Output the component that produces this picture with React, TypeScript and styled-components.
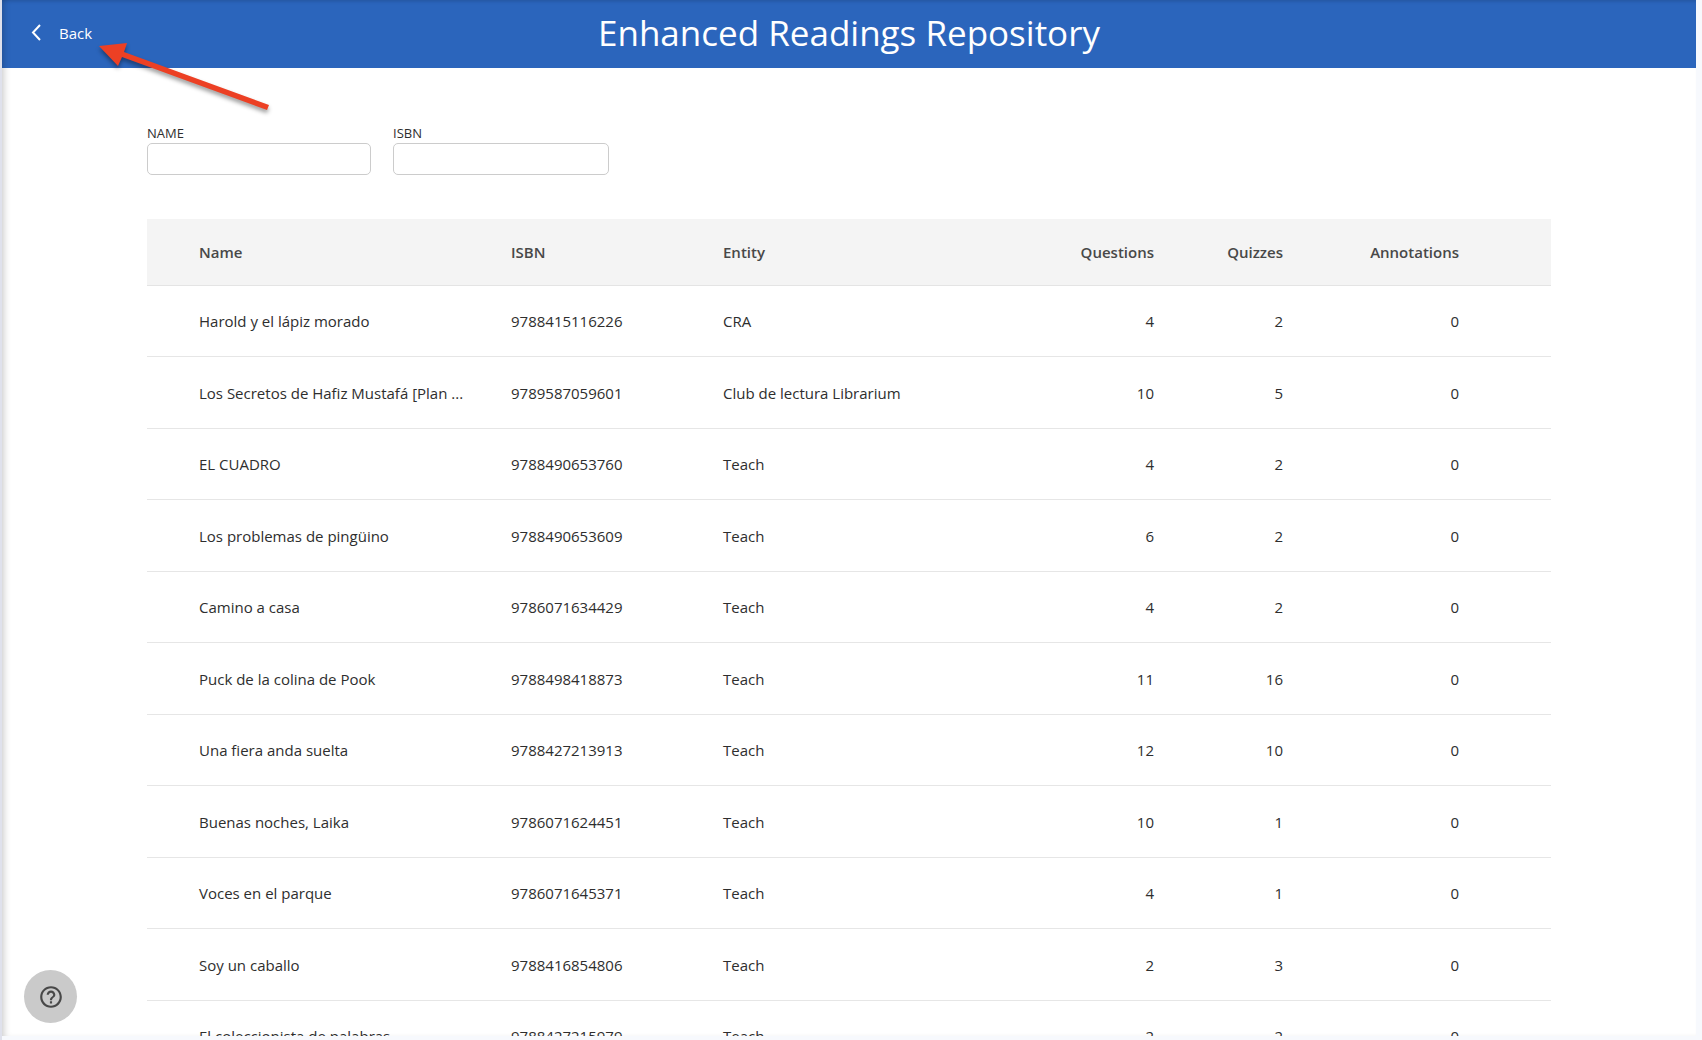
import React from "react";
import styled, { createGlobalStyle } from "styled-components";

const GlobalStyle = createGlobalStyle`
  *, *::before, *::after { box-sizing: border-box; }
  body {
    margin: 0;
    background: #f7f9fd;
    color: #2e2e2e;
    font-family: "Open Sans", "Noto Sans", sans-serif;
    font-size: 15px;
  }
`;

const Page = styled.div`
  height: 100vh;
  padding: 0 6px 4px 2px;
  background: linear-gradient(to right, #dfe1ec 2px, #f7f9fd 2px);
`;

const Panel = styled.div`
  position: relative;
  height: 100%;
  overflow: hidden;
  background: #fff;

  &::after {
    content: "";
    position: absolute;
    inset: 0;
    pointer-events: none;
    box-shadow: inset 6px 0 7px -4px rgba(0, 0, 0, 0.2),
      inset 0 4px 5px -4px rgba(0, 0, 0, 0.2);
  }
`;

const TopBar = styled.header`
  display: grid;
  grid-template-columns: 1fr auto 1fr;
  align-items: center;
  height: 68px;
  padding: 0 24px 2px;
  background: #2b65bc;
  color: #fff;
`;

const BackButton = styled.button`
  display: flex;
  align-items: center;
  justify-self: start;
  gap: 13px;
  padding: 0;
  border: 0;
  background: none;
  color: inherit;
  font: inherit;
  font-weight: 500;
  line-height: 24px;
  cursor: pointer;
`;

const Title = styled.h1`
  margin: 0;
  font-size: 35px;
  font-weight: 400;
  line-height: 48px;
`;

const Content = styled.main`
  padding: 56px 145px 0;
`;

const Filters = styled.form`
  display: flex;
  gap: 22px;
  margin-bottom: 44px;
`;

const Field = styled.div<{ $width: number }>`
  display: flex;
  flex-direction: column;
  width: ${(p) => p.$width}px;
`;

const Label = styled.label`
  font-size: 13px;
  line-height: 19px;
  text-transform: uppercase;
`;

const TextInput = styled.input`
  height: 32px;
  padding: 0 8px;
  border: 1px solid #ccc;
  border-radius: 5px;
  background: #fff;
  color: inherit;
  font: inherit;
`;

const Table = styled.table`
  width: 100%;
  table-layout: fixed;
  border-collapse: separate;
  border-spacing: 0;
`;

const Col = styled.col<{ $width?: number }>`
  width: ${(p) => (p.$width ? `${p.$width}px` : "auto")};
`;

const HeadCell = styled.th<{ $numeric?: boolean }>`
  height: 67px;
  padding: 0 17px;
  border-bottom: 1px solid #e4e4e4;
  background: #f4f4f4;
  color: #484848;
  font-weight: 600;
  text-align: ${(p) => (p.$numeric ? "right" : "left")};
`;

const Row = styled.tr`
  height: 71px;

  &:nth-child(even) {
    height: 72px;
  }
`;

const Cell = styled.td<{ $numeric?: boolean }>`
  padding: 0 17px;
  border-bottom: 1px solid #e6e6e6;
  overflow: hidden;
  text-align: ${(p) => (p.$numeric ? "right" : "left")};
  text-overflow: ellipsis;
  white-space: nowrap;
`;

const HelpButton = styled.button`
  position: absolute;
  bottom: 13px;
  left: 22px;
  display: grid;
  place-items: center;
  width: 53px;
  height: 53px;
  padding: 0;
  border: 0;
  border-radius: 50%;
  background: #cacaca;
  color: #484848;
  cursor: pointer;
`;

const Pointer = styled.svg`
  position: absolute;
  top: 36px;
  left: 90px;
  pointer-events: none;
  filter: drop-shadow(0 3px 2px rgba(0, 0, 0, 0.4));
`;

const columns = [
  { key: "select", label: "", width: 35 },
  { key: "name", label: "Name", width: 312 },
  { key: "isbn", label: "ISBN", width: 212 },
  { key: "entity", label: "Entity" },
  { key: "questions", label: "Questions", width: 160, numeric: true },
  { key: "quizzes", label: "Quizzes", width: 129, numeric: true },
  { key: "annotations", label: "Annotations", width: 176, numeric: true },
  { key: "actions", label: "", width: 75 },
];

type Reading = [string, string, string, number, number, number];

const readings: Reading[] = [
  ["Harold y el lápiz morado", "9788415116226", "CRA", 4, 2, 0],
  ["Los Secretos de Hafiz Mustafá [Plan ...", "9789587059601", "Club de lectura Librarium", 10, 5, 0],
  ["EL CUADRO", "9788490653760", "Teach", 4, 2, 0],
  ["Los problemas de pingüino", "9788490653609", "Teach", 6, 2, 0],
  ["Camino a casa", "9786071634429", "Teach", 4, 2, 0],
  ["Puck de la colina de Pook", "9788498418873", "Teach", 11, 16, 0],
  ["Una fiera anda suelta", "9788427213913", "Teach", 12, 10, 0],
  ["Buenas noches, Laika", "9786071624451", "Teach", 10, 1, 0],
  ["Voces en el parque", "9786071645371", "Teach", 4, 1, 0],
  ["Soy un caballo", "9788416854806", "Teach", 2, 3, 0],
  ["El coleccionista de palabras", "9788427215979", "Teach", 2, 2, 0],
];

export default function App() {
  return (
    <>
      <GlobalStyle />
      <Page>
        <Panel>
          <TopBar>
            <BackButton type="button">
              <svg width="20" height="20" viewBox="0 0 20 20" fill="none" stroke="currentColor" strokeWidth="2" aria-hidden="true">
                <path d="M14 2 L7 9.500 L14 17" />
              </svg>
              Back
            </BackButton>
            <Title>Enhanced Readings Repository</Title>
          </TopBar>

          <Content>
            <Filters>
              <Field $width={224}>
                <Label htmlFor="filter-name">Name</Label>
                <TextInput id="filter-name" type="text" />
              </Field>
              <Field $width={216}>
                <Label htmlFor="filter-isbn">ISBN</Label>
                <TextInput id="filter-isbn" type="text" />
              </Field>
            </Filters>

            <Table>
              <colgroup>
                {columns.map((c) => (
                  <Col key={c.key} $width={c.width} />
                ))}
              </colgroup>
              <thead>
                <tr>
                  {columns.map((c) => (
                    <HeadCell key={c.key} $numeric={c.numeric} scope="col">
                      {c.label}
                    </HeadCell>
                  ))}
                </tr>
              </thead>
              <tbody>
                {readings.map(([name, isbn, entity, questions, quizzes, annotations]) => (
                  <Row key={isbn}>
                    <Cell />
                    <Cell>{name}</Cell>
                    <Cell>{isbn}</Cell>
                    <Cell>{entity}</Cell>
                    <Cell $numeric>{questions}</Cell>
                    <Cell $numeric>{quizzes}</Cell>
                    <Cell $numeric>{annotations}</Cell>
                    <Cell />
                  </Row>
                ))}
              </tbody>
            </Table>
          </Content>

          <HelpButton type="button" aria-label="Help">
            <svg width="26" height="26" viewBox="0 0 24 24" fill="currentColor" aria-hidden="true">
              <path d="M11 18h2v-2h-2v2zm1-16C6.48 2 2 6.48 2 12s4.480 10 10 10 10-4.480 10-10S17.520 2 12 2zm0 18c-4.410 0-8-3.590-8-8s3.590-8 8-8 8 3.590 8 8-3.590 8-8 8zm0-14c-2.210 0-4 1.790-4 4h2c0-1.100.9-2 2-2s2 .9 2 2c0 2-3 1.750-3 5h2c0-2.250 3-2.500 3-5 0-2.210-1.790-4-4-4z" />
            </svg>
          </HelpButton>

          <Pointer width="190" height="84" viewBox="92 36 190 84" aria-hidden="true">
            <path d="M99 46 L127 43 L124 52 L269 105 L267 110 L122 57 L118 66 Z" fill="#ec4024" />
          </Pointer>
        </Panel>
      </Page>
    </>
  );
}
